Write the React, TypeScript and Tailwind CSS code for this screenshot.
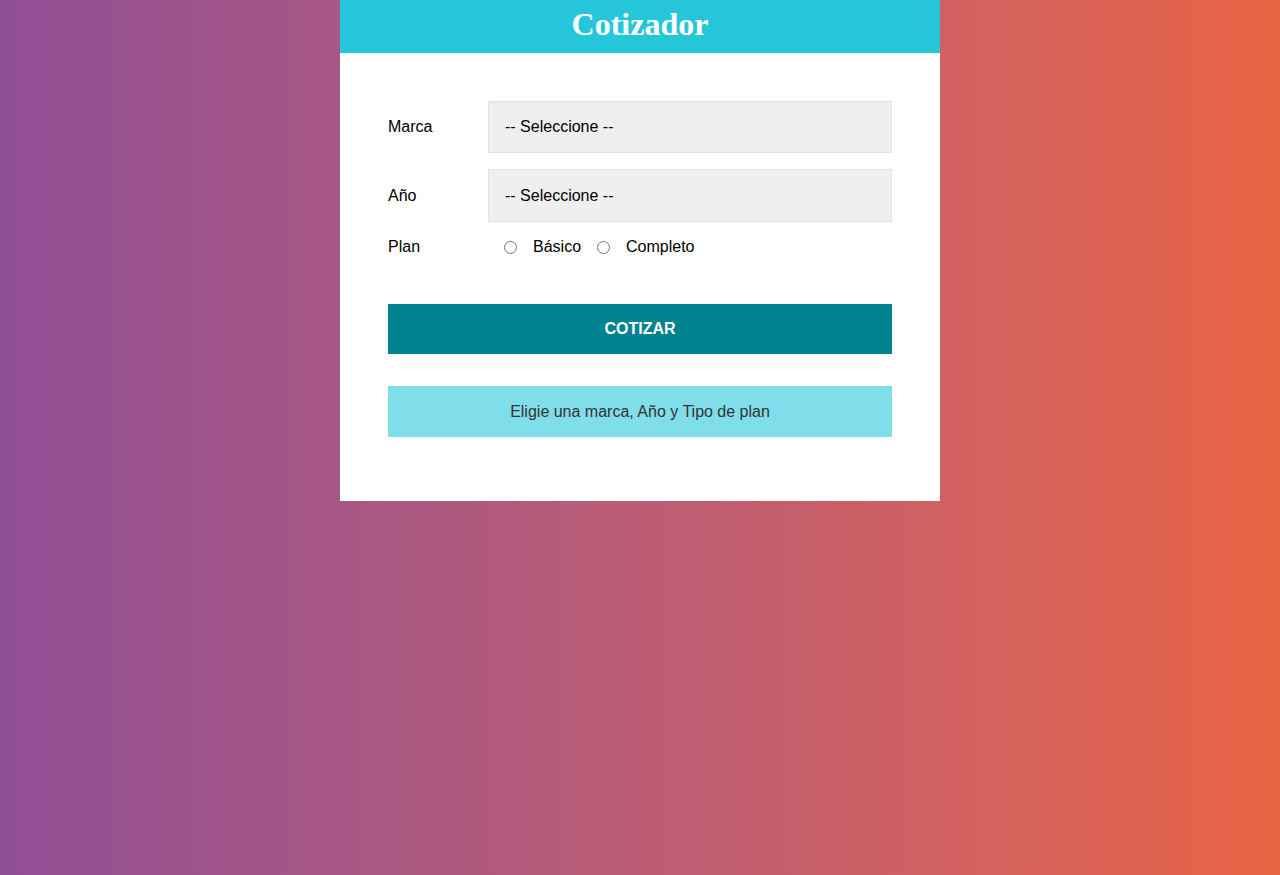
import React from "react";

export default function App() {
  return (
    <div
      className="min-h-[875px] w-full bg-gradient-to-r from-[#904e95] to-[#e96443]"
      style={{ fontFamily: '"Liberation Sans", Arial, sans-serif' }}
    >
      <div className="mx-auto w-[600px] bg-white">
        <header className="flex h-[53px] items-center justify-center bg-[#26c6da] pb-[6px]">
          <h1
            className="text-[32px] font-bold leading-none text-white"
            style={{ fontFamily: '"Liberation Serif", "Times New Roman", serif' }}
          >
            Cotizador
          </h1>
        </header>
        <form className="px-12 pb-16 pt-12 text-base text-black">
          <div className="mb-4 flex items-center">
            <label className="w-[100px] flex-none">Marca</label>
            <select className="h-[52px] flex-1 appearance-none rounded-none border border-[#e1e1e1] bg-[#efefef] px-4 text-base text-black outline-none">
              <option>-- Seleccione --</option>
            </select>
          </div>
          <div className="mb-4 flex items-center">
            <label className="w-[100px] flex-none">Año</label>
            <select className="h-[53px] flex-1 appearance-none rounded-none border border-[#e1e1e1] bg-[#efefef] px-4 text-base text-black outline-none">
              <option>-- Seleccione --</option>
            </select>
          </div>
          <div className="flex h-[18px] items-center">
            <label className="w-[100px] flex-none">Plan</label>
            <input type="radio" name="plan" className="mx-4 h-[13px] w-[13px]" />
            <span>Básico</span>
            <input type="radio" name="plan" className="mx-4 h-[13px] w-[13px]" />
            <span>Completo</span>
          </div>
          <button
            type="button"
            className="mt-12 flex h-[50px] w-full items-center justify-center bg-[#00838f] font-bold uppercase text-white"
          >
            Cotizar
          </button>
          <div className="mt-8 flex h-[51px] items-center justify-center bg-[#80deea] text-[#333]">
            Eligie una marca, Año y Tipo de plan
          </div>
        </form>
      </div>
    </div>
  );
}
